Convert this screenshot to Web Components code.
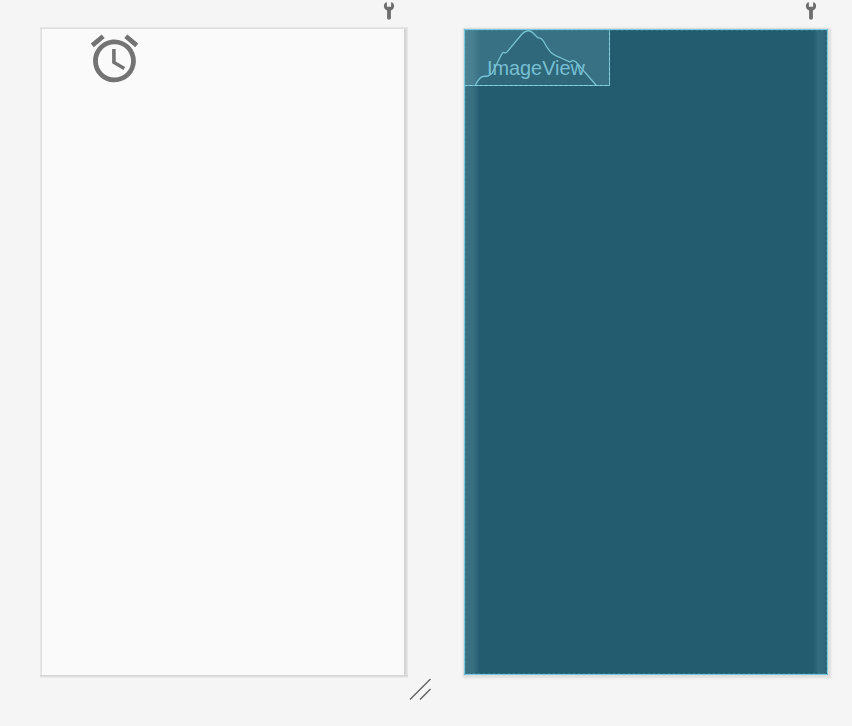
<!DOCTYPE html>
<html lang="en"><head><meta charset="utf-8"><title>Layout editor</title>
<style>html,body{margin:0;height:100%;overflow:hidden;background:#f5f5f5;font-family:"Liberation Sans",sans-serif}</style></head>
<body><design-canvas></design-canvas>
<script>
class ShadowElement extends HTMLElement{
  constructor(){super();this.attachShadow({mode:'open'}).innerHTML=this.constructor.markup;}
}
customElements.define('wrench-icon',class extends ShadowElement{
  static markup=`<style>:host{display:block;width:12px;height:20px}svg{display:block}</style>
  <svg width="12" height="20" viewBox="0 0 12 20"><path d="M3.2 2.2C1.7 3 .9 4.2.9 6c0 2 1.1 3.6 3.2 4.4V18c0 1.1.8 1.7 1.9 1.7S7.900 19.100 7.900 18v-7.600C10 9.600 11.100 8 11.100 6c0-1.800-.8-3-2.300-3.800L8.100 2.500v4.200H3.900V2.500Z" fill="#6e6e6e"/></svg>`;
});
customElements.define('alarm-icon',class extends ShadowElement{
  static markup=`<style>:host{display:block;padding-top:1px}svg{display:block}</style>
  <svg width="57" height="57" viewBox="0 0 24 24" fill="#737373"><path d="M22 5.720l-4.600-3.860-1.290 1.530 4.600 3.860L22 5.720zM7.880 3.390L6.600 1.860 2 5.710l1.290 1.530 4.590-3.850zM12.500 8H11v6l4.750 2.850.75-1.230-4-2.370V8zM12 4c-4.970 0-9 4.030-9 9s4.020 9 9 9a9 9 0 0 0 0-18zm0 16c-3.870 0-7-3.130-7-7s3.130-7 7-7 7 3.130 7 7-3.130 7-7 7z"/></svg>`;
});
customElements.define('device-preview',class extends ShadowElement{
  static markup=`<style>:host{display:block;position:relative;box-sizing:border-box;width:368px;height:651px;padding:2px 4px 3px 2px;
   background:linear-gradient(90deg,#e9e9e9 0,#dcdcdc 2px,#dcdcdc 364px,#d0d0d0 364px,#dadada 366px,#ebebeb 368px)}
   .edge{position:absolute;left:0;right:2px;height:2px;background:linear-gradient(#e9e9e9,#dadada)}.edge.t{top:0}
   .edge.b{bottom:0;right:0;height:3px;background:linear-gradient(#d2d2d2,#dedede 50%,#f1f1f1)}
   .screen{height:646px;background:#fafafa;display:flex;justify-content:flex-start}
   .image{width:145px;height:58px;display:flex;justify-content:center}</style>
   <div class="screen"><div class="image"><slot></slot></div></div><div class="edge t"></div><div class="edge b"></div>`;
});
customElements.define('blueprint-image',class extends ShadowElement{
  static markup=`<style>:host{display:block;position:relative;width:146px;height:57px;background:#8bc8d833}
   svg{display:block}.label{position:absolute;left:23.200px;top:27px;font:21px/24px "Liberation Sans",sans-serif;color:#77bfd2;white-space:nowrap;transform:scaleX(.945);transform-origin:0 50%}</style>
   <svg width="146" height="57" viewBox="0 0 146 57" fill="none"><path d="M11.500 56C14 51 16 48 19 47.500L24 47 28 44.500 37 26.500Q39 22 41 24Q43 24 45 20.500L58 5Q64-1 69 4L74 9Q77 8 80 13C86 25 90 26 97 29L106 33 109 31.500 112 33 132 56Z" fill="#245d7066"/>
   <path d="M11.500 56C14 51 16 48 19 47.500L24 47 28 44.500 37 26.500Q39 22 41 24Q43 24 45 20.500L58 5Q64-1 69 4L74 9Q77 8 80 13C86 25 90 26 97 29L106 33 109 31.500 112 33 132 56" stroke="#78c2d5" stroke-width="1.300"/>
   <path d="M.5 56.500h145V.5" stroke="#6fb9cc"/><path d="M.5 56.500h145V.5" stroke="#8bd3e4" stroke-dasharray="3 2"/></svg><span class="label"><slot></slot></span>`;
});
customElements.define('blueprint-preview',class extends ShadowElement{
  static markup=`<style>:host{display:block;box-sizing:border-box;position:relative;width:364px;height:646px;
   background:linear-gradient(90deg,#3b7184 0,#376e80 9px,#245c6f 16px,#245c6f 349px,#326b7d 354px,#326b7d 359px,#285f72 364px);box-shadow:0 0 0 1px #dededf,1px 1px 2px 2px #dedede}
   svg{position:absolute;inset:0}</style><slot></slot><svg width="364" height="646" fill="none"><path d="M.5.5h363v645H.5z" stroke="#76c9df"/><path d="M1.500 1.500h361v643h-361z" stroke="#57a5b8" stroke-dasharray="3 2" opacity=".35"/></svg>`;
});
customElements.define('design-canvas',class extends ShadowElement{
  static markup=`<style>:host{display:grid;box-sizing:border-box;width:852px;height:726px;grid-template-columns:368px 56px 364px;grid-template-rows:27px 651px 23px;padding-left:40px;justify-content:start;background:#f5f5f5}
   wrench-icon{justify-self:end}.w1{margin-right:13px}.w2{grid-column:3;margin-right:11px}
   blueprint-preview{grid-column:3;margin-top:2px}
   .resize{grid-column:2;grid-row:3;margin-left:1px;display:block}
  </style>
  <wrench-icon class="w1"></wrench-icon><wrench-icon class="w2"></wrench-icon>
  <device-preview><alarm-icon></alarm-icon></device-preview>
  <blueprint-preview><blueprint-image>ImageView</blueprint-image></blueprint-preview>
  <svg class="resize" width="24" height="23"><path d="M1 21.500 21.500 1M11 21.500 21.500 11" stroke="#5e5e5e" stroke-width="1.300"/></svg>`;
});
</script></body></html>
